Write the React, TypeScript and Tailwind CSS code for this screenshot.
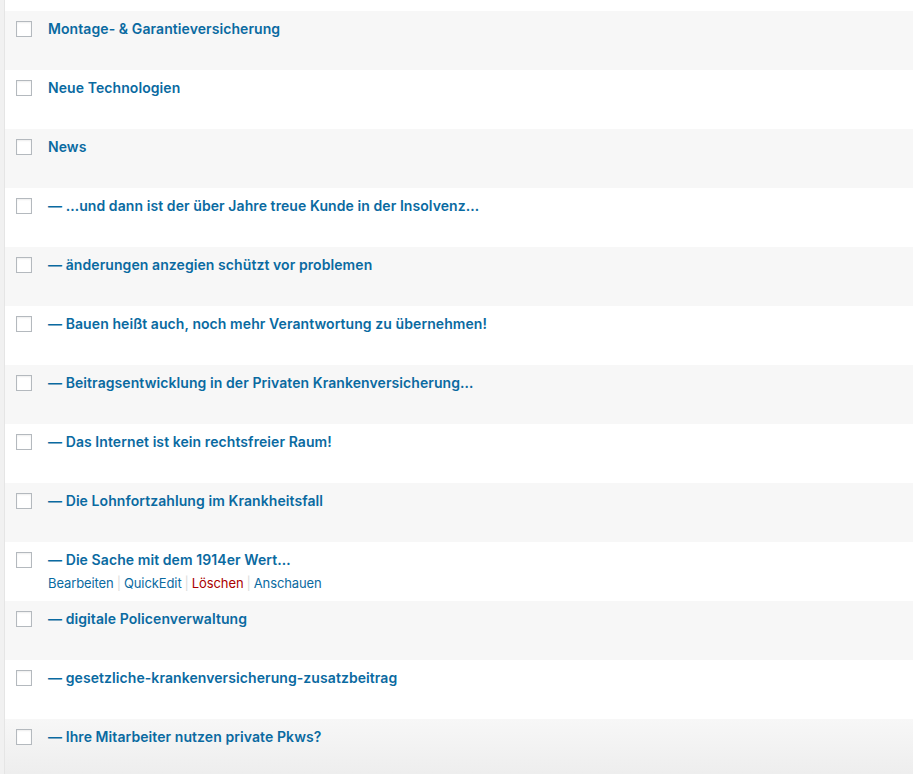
import React from 'react';

const rows = [
  'Montage- & Garantieversicherung',
  'Neue Technologien',
  'News',
  '— …und dann ist der über Jahre treue Kunde in der Insolvenz…',
  '— änderungen anzegien schützt vor problemen',
  '— Bauen heißt auch, noch mehr Verantwortung zu übernehmen!',
  '— Beitragsentwicklung in der Privaten Krankenversicherung…',
  '— Das Internet ist kein rechtsfreier Raum!',
  '— Die Lohnfortzahlung im Krankheitsfall',
  '— Die Sache mit dem 1914er Wert…',
  '— digitale Policenverwaltung',
  '— gesetzliche-krankenversicherung-zusatzbeitrag',
  '— Ihre Mitarbeiter nutzen private Pkws?',
];

function RowActions() {
  return (
    <div className="mt-[5px] text-[13px] leading-[18px] tracking-[-0.1px] text-[#0a6aa1]">
      <span>Bearbeiten</span>
      <span className="px-[3px] text-[#ddd]">|</span>
      <span>QuickEdit</span>
      <span className="px-[3px] text-[#ddd]">|</span>
      <span className="text-[#a00]">Löschen</span>
      <span className="px-[3px] text-[#ddd]">|</span>
      <span>Anschauen</span>
    </div>
  );
}

export default function App() {
  return (
    <div
      className="flex h-[774px] w-[913px] overflow-hidden bg-white"
      style={{ fontFamily: 'Inter, "Liberation Sans", sans-serif' }}
    >
      <div className="w-[4px] shrink-0 bg-[#f1f1f1]" />
      <div className="flex-1 border-l border-[#e5e5e5] pt-[11px]">
        {rows.map((title, i) => (
          <div
            key={title}
            className={
              'flex h-[59px] items-start ' +
              (i % 2 === 0 ? 'bg-[#f7f7f7]' : 'bg-white') +
              (i === rows.length - 1 ? ' bg-gradient-to-b from-[#f7f7f7] to-[#ededed]' : '')
            }
          >
            <div className="ml-[11px] mt-[10px] h-[16px] w-[16px] shrink-0 border border-[#b4b9be] bg-white shadow-[inset_0_1px_2px_rgba(0,0,0,0.07)]" />
            <div className="ml-[16px] pt-[8px]">
              <div className="text-[14px] font-semibold leading-[19px] tracking-[0.08px] text-[#0a6aa1]">{title}</div>
              {i === 9 && <RowActions />}
            </div>
          </div>
        ))}
      </div>
    </div>
  );
}
